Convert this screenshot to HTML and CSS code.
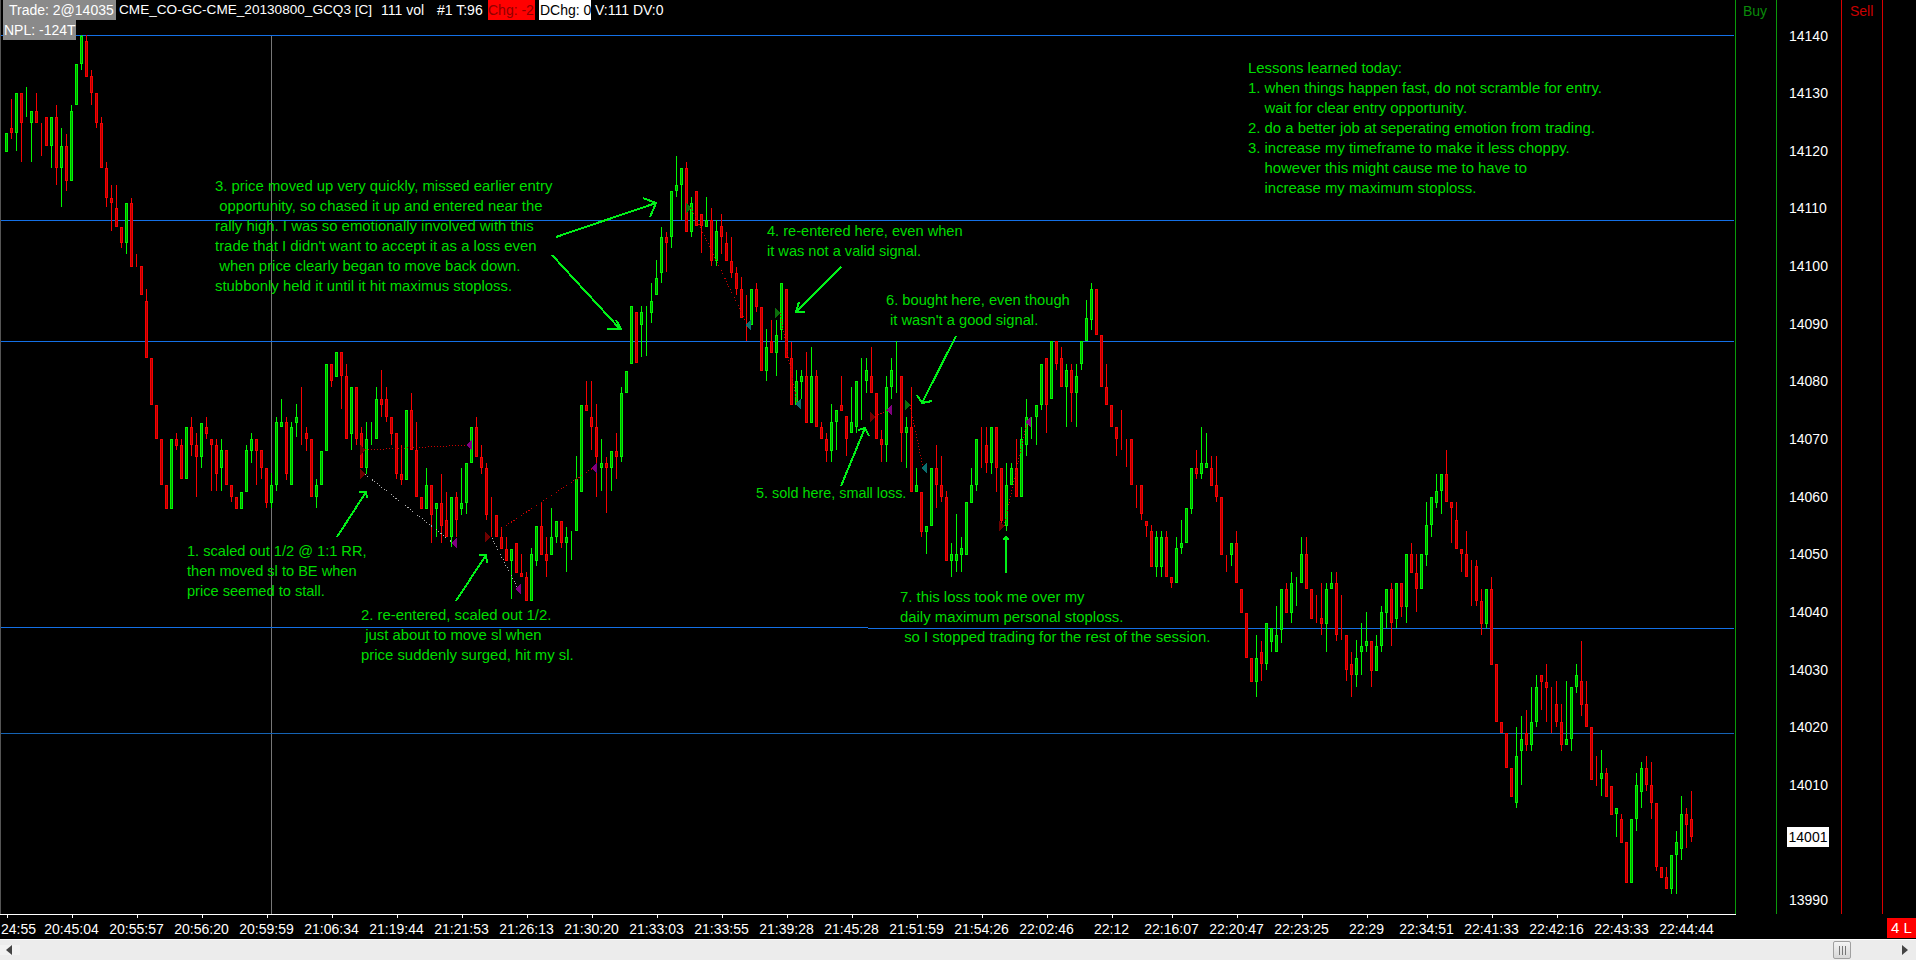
FILE: index.html
```html
<!DOCTYPE html>
<html>
<head>
<meta charset="UTF-8">
<title>Chart trade review</title>
<link rel="stylesheet" href="styles.css">
</head>
<body>
<div class="window">
	<div class="main">
		<div class="plot">
			<svg class="chart" width="1735" height="914" xmlns="http://www.w3.org/2000/svg">
				<line class="cross" x1="271.5" y1="35" x2="271.5" y2="914"/>
				<line class="level" x1="0" y1="35.5" x2="1734" y2="35.5"/>
				<line class="level" x1="0" y1="220.5" x2="1734" y2="220.5"/>
				<line class="level" x1="0" y1="341.5" x2="1734" y2="341.5"/>
				<line class="level" x1="0" y1="627.5" x2="868" y2="627.5"/>
				<line class="level" x1="868" y1="628.5" x2="1734" y2="628.5"/>
				<line class="level dim" x1="0" y1="733.5" x2="1734" y2="733.5"/>
				<g id="candles"></g>
				<!-- trades: entry marker, dotted link, exit marker -->
				<line class="link" x1="365" y1="450" x2="468" y2="445"/>
				<line class="link grey" x1="365" y1="474" x2="453" y2="543"/>
				<line class="link" x1="501" y1="529" x2="593" y2="468"/>
				<line class="link grey" x1="492" y1="538" x2="518" y2="589"/>
				<line class="link" x1="691" y1="208" x2="747" y2="324"/>
				<line class="link" x1="780" y1="313" x2="797" y2="403"/>
				<line class="link" x1="875" y1="416" x2="888" y2="410"/>
				<line class="link" x1="910" y1="405" x2="923" y2="467"/>
				<line class="link" x1="1004" y1="526" x2="1027" y2="422"/>
				<path class="mk-short" d="M360 445l6 5-6 5z"/>
				<path class="mk-short" d="M360 469l6 5-6 5z"/>
				<path class="mk-short" d="M485 532l6 5-6 5z"/>
				<path class="mk-short" d="M870 412l6 5-6 5z"/>
				<path class="mk-short" d="M999 521l6 5-6 5z"/>
				<path class="mk-cover" d="M472 440l-6 5 6 5z"/>
				<path class="mk-cover" d="M457 538l-6 5 6 5z"/>
				<path class="mk-cover" d="M597 463l-6 5 6 5z"/>
				<path class="mk-cover" d="M521 584l-6 5 6 5z"/>
				<path class="mk-cover" d="M892 405l-6 5 6 5z"/>
				<path class="mk-cover" d="M1031 417l-6 5 6 5z"/>
				<path class="mk-long" d="M686 203l6 5-6 5z"/>
				<path class="mk-long" d="M775 308l6 5-6 5z"/>
				<path class="mk-long" d="M905 400l6 5-6 5z"/>
				<path class="mk-sell" d="M751 320l-6 5 6 5z"/>
				<path class="mk-sell" d="M801 399l-6 5 6 5z"/>
				<path class="mk-sell" d="M927 463l-6 5 6 5z"/>
				<!-- hand drawn arrows -->
				<path class="arrow" d="M556 237L656 203M643 198L656 203L650 217"/>
				<path class="arrow" d="M552 255L620 329M607 329H621L616 320"/>
				<path class="arrow" d="M841 267L796 312M805 312H796L799 302"/>
				<path class="arrow" d="M956 336L922 403M917 395L922 403L932 401"/>
				<path class="arrow" d="M841 486L865 428M858 430L865 428L869 436"/>
				<path class="arrow" d="M1006 573V537M1003 540L1006 537L1009 540"/>
				<path class="arrow" d="M337 537L366 492M359 492H366L367 498"/>
				<path class="arrow" d="M456 601L486 555M479 555H486L487 563"/>
			</svg>

			<div class="status">
				<div class="status-row">
					<span class="tag tag-grey tag-trade">Trade: 2@14035</span>
					<span class="tag-plain tag-symbol">CME_CO-GC-CME_20130800_GCQ3 [C]</span>
					<span class="tag-plain tag-vol">111 vol</span>
					<span class="tag-plain tag-bar">#1 T:96</span>
					<span class="tag tag-red">Chg: -2</span>
					<span class="tag tag-white">DChg: 0</span>
					<span class="tag-plain tag-volume">V:111 DV:0</span>
				</div>
				<div class="status-row">
					<span class="tag tag-grey tag-npl">NPL: -124T</span>
				</div>
			</div>

			<div class="note n-lessons">Lessons learned today:
1. when things happen fast, do not scramble for entry.
    wait for clear entry opportunity.
2. do a better job at seperating emotion from trading.
3. increase my timeframe to make it less choppy.
    however this might cause me to have to
    increase my maximum stoploss.</div>
			<div class="note n-3">3. price moved up very quickly, missed earlier entry
 opportunity, so chased it up and entered near the
rally high. I was so emotionally involved with this
trade that I didn't want to accept it as a loss even
 when price clearly began to move back down.
stubbonly held it until it hit maximus stoploss.</div>
			<div class="note n-4">4. re-entered here, even when
it was not a valid signal.</div>
			<div class="note n-6">6. bought here, even though
 it wasn't a good signal.</div>
			<div class="note n-1">1. scaled out 1/2 @ 1:1 RR,
then moved sl to BE when
price seemed to stall.</div>
			<div class="note n-2">2. re-entered, scaled out 1/2.
 just about to move sl when
price suddenly surged, hit my sl.</div>
			<div class="note n-5">5. sold here, small loss.</div>
			<div class="note n-7">7. this loss took me over my
daily maximum personal stoploss.
 so I stopped trading for the rest of the session.</div>
		</div>

		<div class="side side-buy">Buy</div>
		<div class="prices">
			<div class="price">14140</div>
			<div class="price">14130</div>
			<div class="price">14120</div>
			<div class="price">14110</div>
			<div class="price">14100</div>
			<div class="price">14090</div>
			<div class="price">14080</div>
			<div class="price">14070</div>
			<div class="price">14060</div>
			<div class="price">14050</div>
			<div class="price">14040</div>
			<div class="price">14030</div>
			<div class="price">14020</div>
			<div class="price">14010</div>
			<div class="price"></div>
			<div class="price">13990</div>
			<div class="last-price">14001</div>
		</div>
		<div class="side side-sell">Sell</div>
		<div class="side side-end"></div>
	</div>

	<div class="timebar">
		<div class="times">
			<div class="time first">24:55</div>
			<div class="time">20:45:04</div>
			<div class="time">20:55:57</div>
			<div class="time">20:56:20</div>
			<div class="time">20:59:59</div>
			<div class="time">21:06:34</div>
			<div class="time">21:19:44</div>
			<div class="time">21:21:53</div>
			<div class="time">21:26:13</div>
			<div class="time">21:30:20</div>
			<div class="time">21:33:03</div>
			<div class="time">21:33:55</div>
			<div class="time">21:39:28</div>
			<div class="time">21:45:28</div>
			<div class="time">21:51:59</div>
			<div class="time">21:54:26</div>
			<div class="time">22:02:46</div>
			<div class="time short">22:12</div>
			<div class="time">22:16:07</div>
			<div class="time">22:20:47</div>
			<div class="time">22:23:25</div>
			<div class="time short">22:29</div>
			<div class="time">22:34:51</div>
			<div class="time">22:41:33</div>
			<div class="time">22:42:16</div>
			<div class="time">22:43:33</div>
			<div class="time">22:44:44</div>
		</div>
		<div class="position">4 L</div>
	</div>

	<div class="scrollbar">
		<div class="scroll-btn">
			<svg width="6" height="10" xmlns="http://www.w3.org/2000/svg"><path d="M6 0V10L0 5z" fill="#444"/></svg>
		</div>
		<div class="scroll-track">
			<div class="thumb"><i></i><i></i><i></i></div>
		</div>
		<div class="scroll-end">
			<svg width="6" height="10" xmlns="http://www.w3.org/2000/svg"><path d="M0 0V10L6 5z" fill="#444"/></svg>
		</div>
	</div>
</div>
<script src="chart.js"></script>
</body>
</html>
```

FILE: styles.css
```css
html, body {
	margin: 0;
	padding: 0;
	background-color: #000;
}

body {
	font-family: "Liberation Sans", Arial, sans-serif;
	font-size: 14px;
	color: #fff;
	overflow: hidden;
}

.window {
	width: 1916px;
	height: 960px;
	display: flex;
	flex-direction: column;
}

.main {
	height: 914px;
	display: flex;
}

/* chart */

.plot {
	position: relative;
	width: 1735px;
	overflow: hidden;
	border-left: 1px solid #555;
	box-sizing: border-box;
}

.chart {
	position: absolute;
	left: -1px;
	top: 0;
	shape-rendering: crispEdges;
}

.cross {
	stroke: #777;
	stroke-width: 1;
}

.level {
	stroke: #1470e6;
	stroke-width: 1;
}

.level.dim {
	stroke: #1563b4;
}

.up {
	stroke: #00f800;
	fill: #00a000;
}

.down {
	stroke: #f80000;
	fill: #b00000;
}

.link {
	stroke: #c80000;
	stroke-width: 1;
	stroke-dasharray: 1 2;
}

.link.grey {
	stroke: #b0b0b0;
}

.mk-short { fill: #6e0000; }
.mk-cover { fill: #800080; }
.mk-long { fill: #0b6e0b; }
.mk-sell { fill: #0b7070; }

.arrow {
	fill: none;
	stroke: #00f018;
	stroke-width: 2;
}

/* status rows over the chart */

.status {
	position: absolute;
	left: 2px;
	top: 0;
}

.status-row {
	display: flex;
	height: 20px;
	line-height: 20px;
	white-space: pre;
}

.tag {
	box-sizing: border-box;
	overflow: hidden;
}

.tag-plain {
	margin-left: 3px;
}

.tag-symbol {
	width: 254px;
	font-size: 13.6px;
}

.tag-vol {
	width: 47px;
	margin-left: 8px;
}

.tag-bar {
	width: 47px;
	margin-left: 9px;
}

.tag-grey {
	background-color: #8a8a8a;
}

.tag-trade {
	width: 113px;
	padding-left: 6px;
}

.tag-npl {
	width: 73px;
	padding-left: 1px;
}

.tag-red {
	width: 47px;
	margin-left: 4px;
	background-color: #f00;
	color: #900000;
}

.tag-white {
	width: 52px;
	margin-left: 4px;
	padding-left: 1px;
	background-color: #fff;
	color: #000;
}

.tag-volume {
	margin-left: 4px;
}

/* notes */

.note {
	position: absolute;
	white-space: pre;
	color: #00dc00;
	font-size: 14.9px;
	line-height: 20px;
}

.n-lessons { left: 1247px; top: 58px; }
.n-3 { left: 214px; top: 176px; }
.n-4 { left: 766px; top: 221px; font-size: 14.6px; }
.n-6 { left: 885px; top: 290px; font-size: 14.7px; }
.n-1 { left: 186px; top: 541px; font-size: 14.6px; }
.n-2 { left: 360px; top: 605px; }
.n-5 { left: 755px; top: 483px; font-size: 14.4px; }
.n-7 { left: 899px; top: 587px; }

/* right hand columns */

.side {
	box-sizing: border-box;
	height: 914px;
	line-height: 22px;
}

.side-buy {
	width: 41px;
	padding-left: 7px;
	border-left: 1px solid #0a9a0a;
	color: #0a8a0a;
}

.side-sell {
	width: 41px;
	padding-left: 8px;
	border-left: 1px solid #d80000;
	color: #c80000;
}

.side-end {
	width: 34px;
	border-left: 1px solid #d80000;
}

.prices {
	position: relative;
	box-sizing: border-box;
	width: 65px;
	height: 914px;
	padding-top: 7.5px;
	border-left: 1px solid #0a9a0a;
}

.price {
	height: 57.67px;
	line-height: 57.67px;
	padding-left: 12px;
}

.last-price {
	position: absolute;
	left: 10px;
	top: 827px;
	width: 42px;
	height: 20px;
	line-height: 20px;
	text-align: center;
	background-color: #fff;
	color: #000;
}

/* time axis */

.timebar {
	height: 25px;
	display: flex;
	justify-content: space-between;
	align-items: flex-start;
}

.times {
	box-sizing: border-box;
	width: 1736px;
	height: 25px;
	display: flex;
	overflow: hidden;
	border-top: 1px solid #fff;
}

.time {
	position: relative;
	flex: none;
	width: 65px;
	text-align: center;
	line-height: 28px;
}

.time.first {
	box-sizing: border-box;
	margin-left: -26px;
	padding-right: 3px;
	text-align: right;
}

.time.short {
	margin-right: -5px;
}

.time::before {
	content: "";
	position: absolute;
	left: 50%;
	top: 0;
	width: 1px;
	height: 3px;
	background-color: #fff;
}

.position {
	width: 29px;
	height: 20px;
	margin-top: 4px;
	background-color: #f00;
	line-height: 20px;
	text-align: center;
	font-size: 15px;
}

/* scrollbar */

.scrollbar {
	height: 21px;
	display: flex;
	align-items: center;
	box-sizing: border-box;
	border-top: 1px solid #fff;
	background-color: #ececec;
}

.scroll-btn {
	width: 20px;
	padding-left: 6px;
	box-sizing: border-box;
	display: flex;
	background-color: #f2f2f2;
}

.scroll-track {
	flex: 1;
	display: flex;
	justify-content: flex-end;
}

.thumb {
	box-sizing: border-box;
	width: 18px;
	height: 18px;
	display: flex;
	justify-content: center;
	align-items: center;
	gap: 2px;
	border: 1px solid #a0a0a0;
	border-radius: 2px;
	background: linear-gradient(#f4f4f4, #d8d8d8);
}

.thumb i {
	width: 1px;
	height: 9px;
	background-color: #777;
}

.scroll-end {
	width: 65px;
	display: flex;
	justify-content: flex-end;
	padding-right: 8px;
	box-sizing: border-box;
}
```

FILE: chart.js
```js
// bars: letter for colour, then body top, body bottom, wick top, wick bottom
// values are thirds of a pixel, counted from the base of the block
var blocks = [
[0, "g400,455 r385,400,298,418 g280,400,280,452 r280,368,280,485 g350,350,262,350 g332,368,332,485 r332,368,280,368 r368,368,368,468 r350,437 g350,437,350,503 r350,505,315,555 g437,505,385,622 r437,542,403,572 g332,542,315,542 g193,316 g107,193,105,210 r122,230,105,230 r228,280,210,315 r280,368,280,385 r368,505,350,505 r505,593,487,620 r593,610,555,693 r625,680,555,680 r680,730,680,745 g610,730,610,762 r610,800,593,800 r800,800,762,800 r798,886 r903,1075,868,1075"],
[960, "r115,254 r254,358 r358,496 r496,566 g358,566 r358,378,340,390 r376,476,358,476 g322,478 r322,376,290,408 r376,410,340,530 g308,410,308,445 r322,342,290,358 r358,376,358,512 r376,463,358,512 g390,445,358,512 r390,496 r496,532,496,545 r532,566 g515,566 g390,515,376,515 g358,392,340,428 r358,392,358,495 r390,445,390,478 r445,548,445,565 g496,548,460,565 g306,496,290,512 g306,322,238,322 r306,463,290,480 g322,496,306,496 g290,308,252,350 r340,340,202,375 r340,358,322,392 r358,532 g496,532,478,564 g392,496 g132,392 r132,184,132,200 g97,170 r97,168,97,268 r168,358,132,358 g202,342,202,390 r202,358,202,375 r340,445,322,445 g358,445,306,463 g358,358,306,375 g238,358,202,358 r238,254,150,290 r238,290,202,306 r290,342,290,375 r340,463,340,478 r463,480,376,495 g270,480 r270,390,220,390 r390,532,306,532 r532,566 g496,566,445,566 r496,585,496,668 g548,566,548,650 r548,618,462,668 r600,652,515,652 g532,652,532,680 r532,600,515,650 g548,566,445,584 g428,548,428,582 g322,428 r322,410,290,410 r410,445,376,462 r445,584,428,600 r582,582,532,652 r584,652 r652,686,620,686 r686,722,652,722 g686,722,686,838 r670,758 r758,772,702,772 r772,842,755,842 g703,842,684,842 g618,722,618,738 r618,704,548,704 r703,722,652,770 g652,704,565,704 g602,652,602,670 r602,668,602,684 g652,670,620,755 g634,634,634,720 g478,634,408,634 g254,515 r254,272,184,272 r290,322,184,390 r322,410,252,530 g428,445,358,512 r428,445,410,580 g392,445,392,512 r392,410,340,478 g220,410,202,425 g152,220 g-42,132 r-25,130 g-25,15,-42,112 g0,0,-42,108 g-57,-22,-110,10 g-125,-74,-180,-74 g-248,-142,-280,-110 r-248,-230,-265,-145 g-387,-248,-387,-215 g-404,-387,-492,-370 g-455,-404,-455,-300 r-455,-265,-473,-265 g-350,-265,-368,-250 r-387,-282 r-317,-282,-317,-200 g-300,-280,-368,-280 r-300,-178,-335,-162 g-267,-178,-300,-162 r-282,-248,-317,-197 r-230,-178,-265,-178 r-178,-142,-250,-125 r-142,-92,-160,-75 r-92,-5,-128,-5 r-5,-5,-75,62 g-92,15 r-92,-40,-110,-25 r-40,152 g82,152,28,182 r64,100,0,100 g45,98,0,168 g-110,30,-110,60 r-92,115 r115,254,65,254 g184,254,150,254 g168,186,150,236 r168,308,97,308 g168,308,82,308 r168,322,150,322 r322,358,306,358 r358,392,340,425 g306,392,252,425 g270,306,270,390 r254,272,168,272 r288,358,288,408 g306,340,202,340 g184,322,184,340 g184,184,115,300 g150,184,115,218 r168,220,82,220 r220,358 r358,376,330,425 g202,376,168,425 g150,202,115,236 g150,150,64,218 r168,340,168,425 g322,340,290,445 r322,515,202,515 g496,515,445,515 r515,636,515,650 g617,636,617,702 g445,617 r445,496,376,565 r496,532,408,545 r532,722,514,722 g703,722,670,770 g703,722,582,755 g685,704,652,755 g546,704 g496,548,445,548 g358,496,358,512 r376,376,322,445 r376,428,322,460 g322,428,322,462 r322,445,322,515 r445,602,445,620 g496,618,428,632 g445,496,428,496 r445,532,358,532 g358,532,322,532 g290,376,238,408 g306,306,290,358 g254,290,254,375 g132,254,132,270 r115,254,115,340 g64,238 r64,132,64,150 r115,202,82,202 g150,202,132,320 r150,220,132,306 g168,220,132,320 g64,132,64,150 g-6,64,-60,64 g-92,0,-110,30 r-92,45 r45,202 r202,255,132,255 r254,322 r322,358,322,408 r358,358,270,390 r358,358,358,442 r358,496 r496,496,496,565 r496,583,496,600 r602,618,602,650 r634,740,616,740 g652,740,634,772 g652,740,634,772 r652,772,634,772 r772,790,772,805 g685,790,652,790 g670,685,600,702 g565,670 g445,566,445,582 r445,462,390,478 g428,462,322,478 g428,445,340,445 r445,498,408,498 r496,532,408,545 r532,704 r704,704,704,755 g670,704,670,738 r670,790,634,790 r808,878 r878,1015 r1015,1085 g1015,1085,945,1132 r997,1033,963,1083 g910,1033,910,1050 g925,965,925,995 g945,995,858,995 g808,930,808,970 r808,878,790,878 g790,878,756,908 g790,790,772,858 g703,790,652,790 r703,808,652,808 r808,896 r896,896,826,908 r895,912,790,945 g808,912,790,995 g790,808,756,808 r790,945,756,963 r945,945,826,960 r945,1050,945,1082 r1032,1066,996,1132 g1015,1066,960,1100 g978,996,908,1065 g963,978,876,996 r963,1052,963,1100 g978,1052,945,1052 g876,978,858,996 g808,878,808,925 r808,910,790,978 g790,896,790,925 r790,860,790,892 g703,860,703,908 r703,758,670,758 r758,808,703,876 g703,808 g616,704,546,738 g532,616,532,650 g514,548,462,565 g462,514,462,582 r462,547,390,547 r547,565,547,670 r600,686,546,686 r686,703,686,755 r703,772,634,772 r772,772,720,858 r738,842,720,858 r842,912,808,945 g808,912,808,925 r808,1035,772,1035"],
[1920, "r72,245 r245,280 r280,385 r385,470 g348,488,262,503 g298,332,228,435 r280,315,210,332 g245,315,140,332 g142,245,105,262 r106,125,106,210 r125,143,72,245 r193,193,140,280 r193,245,123,262 r245,315,192,332 g297,315,123,315 g142,298,142,332 g106,142,72,160 r124,195,3,228 r193,262,123,262 r262,420 r437,437,348,437 g400,418,330,468 r400,470,384,470 r437,525 g505,523,505,590 r538,608,522,608 r607,730 g538,730 g436,538,400,572 g385,455,366,505 r385,436,348,452 r436,488,366,538 r488,680,488,692 r680,713 r712,748,680,748 g644,748,644,762 g607,644,573,762 g523,626,468,660 r523,556,505,625 r538,592,453,606"]
];

var SVG_NS = "http://www.w3.org/2000/svg";
var layer = document.getElementById("candles");
var index = 0;

function add(tag, cls, attrs) {
	var el = document.createElementNS(SVG_NS, tag);
	el.setAttribute("class", cls);
	for (var k in attrs) el.setAttribute(k, attrs[k]);
	layer.appendChild(el);
}

blocks.forEach(function (block) {
	var base = block[0];
	block[1].split(" ").forEach(function (bar) {
		var cls = bar[0] == "g" ? "up" : "down";
		var v = bar.slice(1).split(",").map(function (n) {
			return Math.round((base + Number(n)) / 3);
		});
		var hi = v.length > 2 ? v[2] : v[0];
		var lo = v.length > 2 ? v[3] : v[1];
		var x = 6 + index * 5;
		add("line", cls, { x1: x + 0.5, x2: x + 0.5, y1: Math.min(hi, v[0]), y2: Math.max(lo, v[1]) });
		add("rect", cls, { x: x - 0.5, y: v[0] + 0.5, width: 2, height: Math.max(v[1] - v[0] - 1, 0) });
		index++;
	});
});
```
